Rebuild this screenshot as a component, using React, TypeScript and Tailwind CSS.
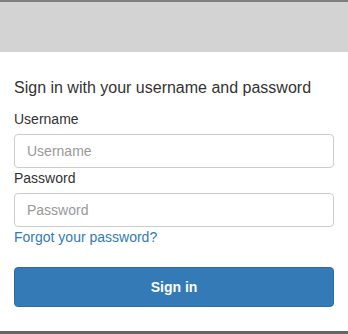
export default function App() {
  return (
    <div className="w-[348px] h-[334px] bg-white flex flex-col font-['Liberation_Sans',Arial,sans-serif] text-[#333]">
      {/* header band */}
      <div className="h-[52px] shrink-0 border-t-2 border-[#7f7f7f] bg-[#d3d3d3]" />

      <form className="flex-1 px-[14px] pt-[26px] border-b-[3px] border-[#666]">
        <h1 className="text-[16px] leading-[20px]">Sign in with your username and password</h1>

        <label htmlFor="username" className="block mt-[11px] mb-[5px] text-[14px] leading-[20px]">
          Username
        </label>
        <input
          id="username"
          type="text"
          placeholder="Username"
          className="block w-full h-[34px] px-3 border border-[#ccc] rounded-[4px] text-[14px] text-[#555] placeholder:text-[#999] outline-none"
        />

        <label htmlFor="password" className="block mb-[5px] text-[14px] leading-[20px]">
          Password
        </label>
        <input
          id="password"
          type="password"
          placeholder="Password"
          className="block w-full h-[34px] px-3 border border-[#ccc] rounded-[4px] text-[14px] text-[#555] placeholder:text-[#999] outline-none"
        />

        <a href="#" className="block w-fit text-[14px] leading-[20px] text-[#337ab7]">
          Forgot your password?
        </a>

        <button
          type="button"
          className="block w-full h-[40px] mt-[20px] bg-[#337ab7] border border-[#2e6da4] rounded-[4px] text-white text-[14px] font-bold"
        >
          Sign in
        </button>
      </form>
    </div>
  );
}
